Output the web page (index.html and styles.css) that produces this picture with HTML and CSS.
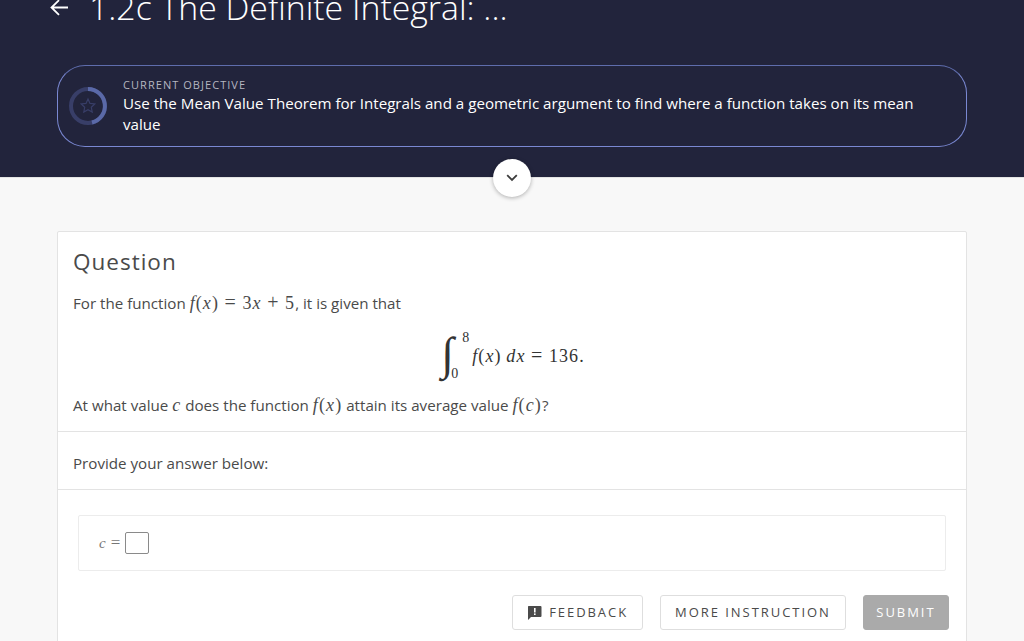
FILE: index.html

```html
<!DOCTYPE html>
<html>
<head>
<title>1.2c The Definite Integral</title>
<link rel="stylesheet" href="styles.css">
</head>
<body>
<!-- dark header, page is scrolled so the title is cut at the top -->
<div class="header">
  <div class="titlerow">
    <svg class="backarrow" width="20" height="20" viewBox="0 0 20 20"><path d="M19 8.5H2.5M10 1.2L2.5 8.5L10 15.8" fill="none" stroke="#fff" stroke-width="1.8"/></svg>
    <h1 class="title">1.2c The Definite Integral: ...</h1>
  </div>
  <div class="objective">
    <svg class="ring" width="40" height="40" viewBox="0 0 40 40">
      <circle cx="20" cy="20" r="17" fill="none" stroke="#383e68" stroke-width="4"/>
      <path d="M20 3A17 17 0 0 1 24 36.5" fill="none" stroke="#5a69a8" stroke-width="4"/>
      <path d="M20 13l2 4.4 4.8.6-3.5 3.3.9 4.7-4.2-2.3-4.2 2.3.9-4.7-3.5-3.3 4.8-.6z" fill="none" stroke="#383e68" stroke-width="1.2"/>
    </svg>
    <div class="objective-text">
      <div class="objective-label">CURRENT OBJECTIVE</div>
      <div class="objective-desc">Use the Mean Value Theorem for Integrals and a geometric argument to find where a function takes on its mean value</div>
    </div>
  </div>
  <div class="collapse">
    <svg width="12" height="8" viewBox="0 0 12 8"><path d="M1.2 1.2L6 6L10.8 1.2" fill="none" stroke="#3c3c3c" stroke-width="1.8"/></svg>
  </div>
</div>

<div class="content">
  <div class="card">
    <div class="section question">
      <h2 class="question-title">Question</h2>
      <p class="line">For the function <span class="math"><i>f</i>(<i>x</i>)<span class="op">=</span>3<i>x</i><span class="op">+</span>5</span>, it is given that</p>
      <div class="display">
        <span class="integral">
          <span class="int-sign">∫</span>
          <span class="limit-top">8</span>
          <span class="limit-bottom">0</span>
        </span>
        <span class="math"><i>f</i>(<i>x</i>)&#8201;<i>dx</i><span class="op">=</span>136.</span>
      </div>
      <p class="line">At what value <span class="math"><i>c</i></span> does the function <span class="math"><i>f</i>(<i>x</i>)</span> attain its average value <span class="math"><i>f</i>(<i>c</i>)</span>?</p>
    </div>
    <div class="section prompt">Provide your answer below:</div>
    <div class="section answer">
      <div class="answerbox">
        <span class="math answer-eq"><i>c</i><span class="op">=</span></span>
        <span class="blank"></span>
      </div>
      <div class="actions">
        <button class="btn">
          <svg width="15" height="15" viewBox="0 0 15 15"><path d="M1.5 1H13.5A1 1 0 0 1 14.5 2V11A1 1 0 0 1 13.5 12H4L1 15V1.5z" fill="#4a4a4a"/><rect x="7" y="3" width="1.6" height="4.5" fill="#fff"/><rect x="7" y="8.4" width="1.6" height="1.6" fill="#fff"/></svg>
          FEEDBACK
        </button>
        <button class="btn">MORE INSTRUCTION</button>
        <button class="btn btn-submit">SUBMIT</button>
      </div>
    </div>
  </div>
</div>
</body>
</html>
```

FILE: styles.css

```css
html, body
{
  margin: 0;
  height: 641px;
  overflow: hidden;
}
body
{
  background: #f8f8f8;
  font-family: "Open Sans", sans-serif;
  color: #4a4a4a;
}

.header
{
  position: relative;
  height: 177px;
  background: #22243c;
  border-bottom: 1px solid #e4e4e4;
  padding: 0 57px;
}
.titlerow
{
  display: flex;
  align-items: center;
  height: 65px;
}
.backarrow
{
  margin-left: -8px;
  position: relative;
  top: -24px;
}
.title
{
  margin: 0 0 0 20px;
  font-size: 33.8px;
  font-weight: 300;
  color: #fff;
  line-height: 40px;
  position: relative;
  top: -26px;
  white-space: nowrap;
}
.objective
{
  display: flex;
  align-items: center;
  height: 82px;
  box-sizing: border-box;
  border: 1px solid #7a88d2;
  border-top-color: #5f6dad;
  border-radius: 28px;
  padding: 0 50px 0 10px;
}
.ring
{
  flex: none;
  margin-right: 15px;
}
.objective-label
{
  font-size: 11px;
  letter-spacing: 1.05px;
  line-height: 16px;
  color: #b5b6c0;
}
.objective-desc
{
  font-size: 15.15px;
  line-height: 21px;
  color: #fff;
}
.collapse
{
  position: absolute;
  left: 493px;
  top: 159px;
  width: 38px;
  height: 38px;
  border-radius: 50%;
  background: #fff;
  box-shadow: 0 1px 4px rgba(0,0,0,.3);
  display: flex;
  align-items: center;
  justify-content: center;
}

.content
{
  padding: 53px 57px 0;
}
.card
{
  background: #fff;
  border: 1px solid #e3e3e3;
  border-radius: 2px;
  height: 500px;
}
.section
{
  padding: 0 15px;
}
.question
{
  height: 200px;
  box-sizing: border-box;
  border-bottom: 1px solid #e3e3e3;
}
.question-title
{
  margin: 0 0 13px;
  padding-top: 15px;
  font-size: 22.5px;
  font-weight: 400;
  letter-spacing: 1px;
  line-height: 30px;
}
.line
{
  margin: 0;
  font-size: 15.15px;
  line-height: 24px;
}
.math
{
  font-family: "Liberation Serif", serif;
  font-size: 18px;
  letter-spacing: 1.1px;
}
.op
{
  font-size: 20px;
  margin: 0 5.5px;
}
.display
{
  display: flex;
  justify-content: center;
  align-items: center;
  height: 78px;
  box-sizing: border-box;
  padding-top: 2px;
  color: #333;
}
.integral
{
  position: relative;
  width: 33px;
  height: 46px;
}
.int-sign
{
  position: absolute;
  left: 2px;
  top: -4px;
  font-family: "Liberation Serif", serif;
  font-size: 46px;
  line-height: 52px;
}
.limit-top,
.limit-bottom
{
  position: absolute;
  font-family: "Liberation Serif", serif;
  font-size: 14px;
  line-height: 14px;
}
.limit-top
{
  left: 23px;
  top: -1px;
}
.limit-bottom
{
  left: 12px;
  top: 35px;
}
.prompt
{
  height: 58px;
  line-height: 63px;
  font-size: 15.15px;
  box-sizing: border-box;
  border-bottom: 1px solid #e3e3e3;
}
.answer
{
  padding: 25px 20px 0;
}
.answerbox
{
  display: flex;
  align-items: center;
  height: 56px;
  box-sizing: border-box;
  border: 1px solid #ececec;
  border-radius: 2px;
  padding-left: 20px;
}
.answer-eq
{
  color: #777;
  font-size: 15px;
}
.answer-eq .op
{
  margin: 0 4px;
  font-size: 17px;
}
.blank
{
  width: 24px;
  height: 22px;
  box-sizing: border-box;
  border: 1px solid #8a8a8a;
  border-radius: 2px;
}
.actions
{
  display: flex;
  justify-content: flex-end;
  gap: 17px;
  margin: 24px -3px 0 0;
}
.btn
{
  display: flex;
  align-items: center;
  gap: 7px;
  height: 35px;
  padding: 0 14px 1px;
  background: #fff;
  border: 1px solid #dedede;
  border-radius: 3px;
  font-family: "Open Sans", sans-serif;
  font-size: 13px;
  letter-spacing: 1.95px;
  color: #4a4a4a;
}
.btn-submit
{
  background: #aaa;
  border-color: #aaa;
  color: #fff;
  padding: 0 12.5px 1px;
}
```
